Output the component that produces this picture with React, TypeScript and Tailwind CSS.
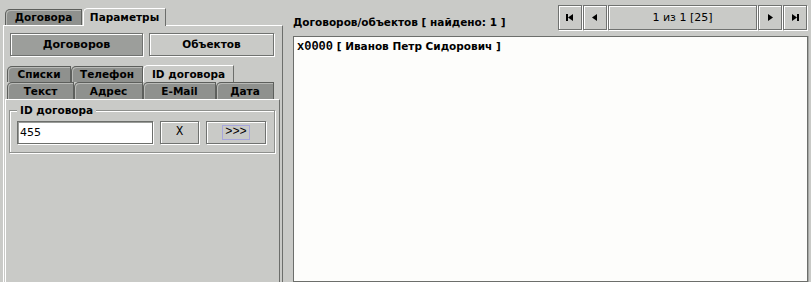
import React from "react";

const btn =
  "border border-[#707270] shadow-[inset_1px_1px_0_#ffffff,1px_1px_0_#ffffff] flex items-center justify-center";

function OuterTab({ label, selected, w }: { label: string; selected?: boolean; w: number }) {
  return (
    <div
      style={{ width: w }}
      className={
        selected
          ? "h-[18px] -mb-px z-10 bg-[#c9cac7] border-l border-t border-white border-r-[#6c6e6b] border-r rounded-tl-[5px] flex items-center justify-center font-bold"
          : "h-[16px] bg-[#8f918e] border border-b-0 border-[#5d5f5c] shadow-[inset_1px_1px_0_#b9bab7] rounded-tl-[5px] flex items-center justify-center font-bold"
      }
    >
      {label}
    </div>
  );
}

function InnerTab({ label, selected, w, h = 17 }: { label: string; selected?: boolean; w: number; h?: number }) {
  return (
    <div
      style={{ width: w, height: h }}
      className={
        selected
          ? "bg-[#c9cac7] border-l border-t border-white border-r border-r-[#6c6e6b] rounded-tl-[5px] flex items-center justify-center font-bold"
          : "bg-[#8f918e] border border-b-0 border-[#5d5f5c] shadow-[inset_1px_1px_0_#b9bab7] rounded-tl-[5px] flex items-center justify-center font-bold"
      }
    >
      {label}
    </div>
  );
}

function Tri({ dir, bar }: { dir: "l" | "r"; bar?: boolean }) {
  return (
    <svg width="10" height="9" viewBox="0 0 10 9">
      {dir === "l" ? (
        <>
          {bar && <rect x="1" y="1" width="2" height="7" fill="#000" />}
          <polygon points={bar ? "3,4.5 8,1 8,8" : "2,4.5 7,1 7,8"} fill="#000" />
        </>
      ) : (
        <>
          <polygon points={bar ? "2,1 7,4.5 2,8" : "3,1 8,4.5 3,8"} fill="#000" />
          {bar && <rect x="7" y="1" width="2" height="7" fill="#000" />}
        </>
      )}
    </svg>
  );
}

export default function App() {
  return (
    <div className="w-[811px] h-[282px] bg-[#c9cac7] flex overflow-hidden font-['DejaVu_Sans',sans-serif] text-[10.5px] leading-none text-black">
      {/* Left column */}
      <div className="w-[293px] shrink-0 pt-[8px] pl-[3px] flex flex-col">
        <div className="flex items-end pl-[2px] gap-[1px]">
          <OuterTab label="Договора" w={77} />
          <OuterTab label="Параметры" w={83} selected />
        </div>
        <div className="w-[280px] flex-1 border-l border-t border-white border-r border-r-[#6c6e6b] flex flex-col">
          <div className="flex gap-[6px] pl-[6px] pt-[7px]">
            <div className={btn + " w-[133px] h-[23px] bg-[#9c9e9b] font-bold text-[11px]"}>Договоров</div>
            <div className={btn + " w-[125px] h-[23px] bg-[#c9cac7] font-bold"}>Объектов</div>
          </div>
          <div className="mt-[9px] ml-[1px] mr-[2px] flex-1 flex flex-col">
            <div className="flex items-end pl-[2px]">
              <InnerTab label="Списки" w={64} h={16} />
              <InnerTab label="Телефон" w={72} h={16} />
              <InnerTab label="ID договора" w={91} selected h={17} />
            </div>
            <div className="flex items-end pl-[2px]">
              <InnerTab label="Текст" w={67} />
              <InnerTab label="Адрес" w={69} />
              <InnerTab label="E-Mail" w={73} />
              <InnerTab label="Дата" w={58} />
            </div>
            <div className="flex-1 border-l border-t border-white border-r border-r-[#6c6e6b] pt-[10px] pl-[3px] pr-[4px]">
              <div className="relative border border-[#8e908d] shadow-[inset_1px_1px_0_#ffffff,1px_1px_0_#ffffff] h-[43px] flex items-center gap-[7px] pl-[7px] pt-[1px]">
                <span className="absolute left-[7px] top-[-6px] px-[3px] bg-[#c9cac7] font-bold">ID договора</span>
                <div className="w-[136px] h-[23px] bg-white border border-[#6c6e6b] shadow-[inset_1px_1px_0_#9a9c99,1px_1px_0_#ffffff] flex items-center pl-[2px] text-[11px]">
                  455
                </div>
                <div className={btn + " w-[39px] h-[23px] bg-[#c9cac7] text-[12px] font-['Liberation_Mono',monospace]"}>X</div>
                <div className={btn + " w-[60px] h-[23px] bg-[#c9cac7]"}>
                  <span className="w-[28px] h-[15px] border border-[#a7a6dc] flex items-center justify-center font-['Liberation_Mono',monospace] text-[12px]">
                    &gt;&gt;&gt;
                  </span>
                </div>
              </div>
            </div>
          </div>
        </div>
      </div>

      {/* Right column */}
      <div className="flex-1 flex flex-col pr-[3px]">
        <div className="h-[36px] flex items-start justify-between shrink-0">
          <div className="mt-[17px] font-bold">Договоров/объектов [ найдено: 1 ]</div>
          <div className="mt-[5px] flex gap-[1px] mr-[1px]">
            <div className={btn + " w-[24px] h-[25px]"}>
              <Tri dir="l" bar />
            </div>
            <div className={btn + " w-[24px] h-[25px]"}>
              <Tri dir="l" />
            </div>
            <div className={btn + " w-[149px] h-[25px] text-[11px]"}>1 из 1 [25]</div>
            <div className={btn + " w-[24px] h-[25px]"}>
              <Tri dir="r" />
            </div>
            <div className={btn + " w-[24px] h-[25px]"}>
              <Tri dir="r" bar />
            </div>
          </div>
        </div>
        <div className="flex-1 bg-[#fdfdfb] border border-[#6c6e6b] shadow-[1px_0_0_#a5a7a4] pt-[4px] pl-[3px]">
          <div className="font-bold text-[10.5px]">
            <span className="font-['Liberation_Mono',monospace] text-[12px]">x0000</span> [ Иванов Петр Сидорович ]
          </div>
        </div>
      </div>
    </div>
  );
}
